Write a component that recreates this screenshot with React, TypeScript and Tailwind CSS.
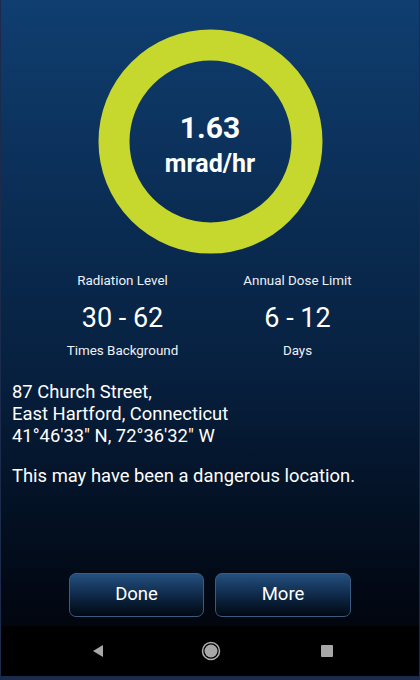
import React from "react";

const font = { fontFamily: "Roboto, 'Noto Sans', sans-serif" };

function DoseRing() {
    return (
        <div className="relative mx-auto mt-[29px] w-[225px] h-[225px]">
            <svg viewBox="0 0 225 225" className="absolute inset-0 w-full h-full">
                <circle cx="112.5" cy="112.5" r="96.5" fill="none" stroke="#c6d82e" strokeWidth="31" />
            </svg>
            <div className="absolute inset-0 flex flex-col items-center justify-center text-white font-bold">
                <span className="text-[30px] leading-[34px] mt-[6px]">1.63</span>
                <span className="text-[25px] leading-[30px] mt-[4px]">mrad/hr</span>
            </div>
        </div>
    );
}

function Stat({ label, value, unit }: { label: string; value: string; unit: string }) {
    return (
        <div className="flex flex-col items-center text-white">
            <span className="text-[13.4px] leading-[18px] text-[#eef1f6]">{label}</span>
            <span className="mt-[12px] text-[27px] leading-[32px]">{value}</span>
            <span className="mt-[8px] text-[13.4px] leading-[18px] text-[#eef1f6]">{unit}</span>
        </div>
    );
}

export default function App() {
    return (
        <div
            style={font}
            className="w-[420px] h-[680px] flex flex-col overflow-hidden border-x border-b-4 border-[#1c2b4b] bg-gradient-to-b from-[#0f3e70] via-[#07203f] via-55% to-[#010307]"
        >
            <DoseRing />

            {/* Stats */}
            <div className="grid grid-cols-2 px-[34px] mt-[18px]">
                <Stat label="Radiation Level" value="30 - 62" unit="Times Background" />
                <Stat label="Annual Dose Limit" value="6 - 12" unit="Days" />
            </div>

            {/* Location */}
            <div className="px-[11px] mt-[21px] text-white text-[18.4px] leading-[22px]">
                <p>87 Church Street,</p>
                <p>East Hartford, Connecticut</p>
                <p>41°46'33" N, 72°36'32" W</p>
                <p className="mt-[18px]">This may have been a dangerous location.</p>
            </div>

            <div className="flex-1" />

            {/* Buttons */}
            <div className="flex justify-center gap-[11px] pb-[9px]">
                <button className="w-[135px] h-[44px] rounded-[7px] border border-[#3d5a80] bg-gradient-to-b from-[#24507f] via-[#0f2a4a] to-[#020912] text-white text-[18.5px]">
                    Done
                </button>
                <button className="w-[136px] h-[44px] rounded-[7px] border border-[#3d5a80] bg-gradient-to-b from-[#24507f] via-[#0f2a4a] to-[#020912] text-white text-[18.5px]">
                    More
                </button>
            </div>

            {/* Nav bar */}
            <div className="h-[50px] bg-black flex items-center justify-center gap-[96px] pl-[4px]">
                <svg width="14" height="14" viewBox="0 0 14 14">
                    <polygon points="12,1 12,13 2,7" fill="#a8a8a8" />
                </svg>
                <svg width="20" height="20" viewBox="0 0 20 20">
                    <circle cx="10" cy="10" r="8.5" fill="none" stroke="#b0b0b0" strokeWidth="1.5" />
                    <circle cx="10" cy="10" r="6.5" fill="#a8a8a8" />
                </svg>
                <div className="w-[12px] h-[12px] bg-[#a8a8a8] rounded-[1px] ml-[4px]" />
            </div>
        </div>
    );
}
